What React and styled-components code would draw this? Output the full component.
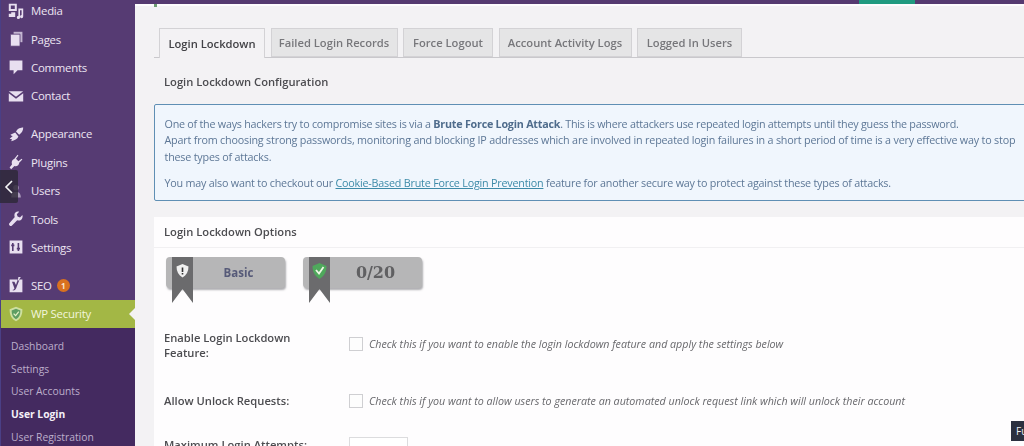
import React from "react";
import styled, { createGlobalStyle } from "styled-components";

const Global = createGlobalStyle`
  html, body { margin: 0; padding: 0; background: #f3f2f4; }
  body { font-family: "Open Sans", "Noto Sans", "Liberation Sans", sans-serif; overflow: hidden; }
  * { box-sizing: border-box; }
`;

const Page = styled.div`
  position: relative;
  display: flex;
  width: 1024px;
  height: 446px;
  overflow: hidden;
  filter: blur(0.5px);
`;

const Sidebar = styled.nav`
  flex: 0 0 135px;
  height: 446px;
  overflow: hidden;
  background: #563b73;
  border-left: 1px solid #4a3f86;
`;

const MenuList = styled.div`
  display: flex;
  flex-direction: column;
  margin-top: -3.5px;
`;

const MenuItem = styled.div`
  flex: none;
  display: flex;
  align-items: center;
  gap: 7px;
  height: 28.4px;
  padding-left: 7px;
  margin-top: ${(p) => p.$sep || 0}px;
  font-size: 11.4px;
  letter-spacing: -0.25px;
  color: #ede5f2;
  svg { flex: 0 0 16px; }
`;

const ActiveItem = styled(MenuItem)`
  position: relative;
  background: #a3b745;
  color: #f2f5dc;
  margin-top: 0;
  &::after {
    content: "";
    position: absolute;
    right: 0;
    top: 8px;
    border: 6px solid transparent;
    border-right-color: #f3f2f4;
  }
`;

const CountBadge = styled.span`
  display: inline-flex;
  align-items: center;
  justify-content: center;
  width: 13px;
  height: 13px;
  margin-left: -2px;
  border-radius: 50%;
  background: #d9711f;
  color: #fbe6cf;
  font-size: 8px;
  font-weight: 700;
`;

const SubMenu = styled.div`
  flex: none;
  display: flex;
  flex-direction: column;
  padding-top: 7px;
  height: 140px;
  background: #442a60;
`;

const SubItem = styled.div`
  flex: none;
  height: 22.7px;
  line-height: 22.7px;
  padding-left: 10px;
  font-size: 10.3px;
  font-weight: ${(p) => (p.$active ? 700 : 400)};
  color: ${(p) => (p.$active ? "#f4f0f7" : "#bdaecb")};
`;

const Collapse = styled.div`
  position: absolute;
  left: 0;
  top: 170px;
  width: 18px;
  height: 33px;
  display: flex;
  align-items: center;
  justify-content: center;
  background: rgba(45, 40, 55, 0.82);
  border-radius: 0 2px 2px 0;
`;

const Main = styled.main`
  flex: 1;
  min-width: 0;
  height: 446px;
  overflow: hidden;
`;

const TopBar = styled.div`
  display: flex;
  height: 4px;
  background: #553a70;
  padding-left: 724px;
`;

const TopAccent = styled.span`
  width: 56px;
  background: #1f9a7f;
`;

const TopGap = styled.div`
  height: 2px;
  background: #fdfcfd;
`;

const GreenTick = styled.div`
  position: absolute;
  left: 154px;
  top: 4px;
  width: 3px;
  height: 3px;
  background: #6d9c72;
`;

const Tabs = styled.div`
  display: flex;
  gap: 5.5px;
  height: 30px;
  margin: 22px 0 0 19px;
  padding-left: 5px;
  border-bottom: 1px solid #c9c8cc;
  align-items: flex-end;
`;

const Tab = styled.div`
  flex: none;
  display: flex;
  align-items: center;
  justify-content: center;
  width: ${(p) => p.$w}px;
  height: ${(p) => (p.$active ? 30 : 29)}px;
  margin-bottom: ${(p) => (p.$active ? -1 : 0)}px;
  font-size: 11.2px;
  font-weight: 600;
  white-space: nowrap;
  color: ${(p) => (p.$active ? "#424246" : "#77777b")};
  background: ${(p) => (p.$active ? "#f3f2f4" : "#e5e5e6")};
  border: 1px solid #d3d2d5;
  border-bottom: ${(p) => (p.$active ? "none" : "1px solid #d3d2d5")};
`;

const SectionTitle = styled.h2`
  margin: 0;
  padding: 15px 0 0 29px;
  height: 46px;
  font-size: 11.2px;
  line-height: 18px;
  font-weight: 600;
  color: #4c4c50;
`;

const Notice = styled.div`
  margin-left: 18.5px;
  margin-right: -4px;
  height: 97px;
  padding: 11px 10px 0 10px;
  background: #f0f6fd;
  border: 1px solid #5f8fb4;
  border-radius: 2px;
  font-size: 10.75px;
  line-height: 16.3px;
  color: #5d7796;
`;

const NoticePara = styled.p`
  margin: 0 0 ${(p) => (p.$tight ? 0 : 10)}px;
  letter-spacing: ${(p) => p.$ls}px;
  white-space: nowrap;
  strong { font-weight: 700; color: #4f6c8c; }
  a { color: #3d8aa8; text-decoration: underline; }
`;

const Panel = styled.section`
  margin: 16px 0 0 19px;
  background: #fefdfe;
  height: 240px;
`;

const PanelTitle = styled.h3`
  margin: 0;
  height: 31px;
  padding: 6px 0 0 10px;
  font-size: 11.2px;
  line-height: 18px;
  font-weight: 600;
  color: #4c4c50;
  border-bottom: 1px solid #f1f0f2;
`;

const Badges = styled.div`
  display: flex;
  gap: 18px;
  padding: 9px 0 0 12px;
  height: 82px;
`;

const Badge = styled.div`
  position: relative;
  display: flex;
  align-items: center;
  justify-content: center;
  width: 119px;
  height: 31px;
  padding-left: 26px;
  background: #b6b6b7;
  border-radius: 4px;
  box-shadow: 1px 2px 2px rgba(110, 110, 115, 0.55);
  color: ${(p) => p.$color};
  font-family: ${(p) => p.$font};
  font-size: ${(p) => p.$size}px;
  font-weight: 700;
`;

const Ribbon = styled.svg`
  position: absolute;
  left: 6px;
  top: 0;
`;

const FormRow = styled.div`
  display: grid;
  grid-template-columns: 185px 1fr;
  height: ${(p) => p.$h}px;
  padding-left: 10px;
`;

const FieldLabel = styled.div`
  font-size: 11.2px;
  line-height: 15px;
  font-weight: 600;
  color: #4c4c50;
`;

const FieldBody = styled.div`
  display: flex;
  align-items: flex-start;
  gap: 6px;
  padding-top: ${(p) => p.$top}px;
`;

const Check = styled.span`
  flex: 0 0 14px;
  height: 14px;
  background: #fdfdfd;
  border: 1px solid #cfcfd2;
`;

const Hint = styled.span`
  font-size: 10.7px;
  line-height: 14px;
  font-style: italic;
  white-space: nowrap;
  color: #68686c;
`;

const NumberBox = styled.span`
  display: block;
  width: 59px;
  height: 26px;
  border: 1px solid #dcdcde;
  background: #fff;
`;

const Tooltip = styled.div`
  position: absolute;
  left: 1011px;
  top: 421px;
  width: 20px;
  height: 20px;
  padding-left: 5px;
  background: #2b3040;
  color: #f1f1f3;
  font-size: 10px;
  line-height: 20px;
`;

const C = "#e8dff0";
const Ico = ({ children }) => (
  <svg width="16" height="16" viewBox="0 0 20 20" fill={C}>{children}</svg>
);

const icons = {
  media: <Ico><path d="M1 1h10v9H1z M3.5 3v4.500h5V3z" fillRule="evenodd" /><path d="M4 11.500h5v6H1v-4h3z" /><path d="M13 7h6v10a2 2 0 1 1-2-2V9h-2v9a2 2 0 1 1-2-2z" /></Ico>,
  pages: <Ico><path d="M7 1h11v13H7z" opacity=".75" /><path d="M3 4h12v15H3z" stroke="#563b73" strokeWidth="1" /></Ico>,
  comments: <Ico><path d="M2 2h16v12h-6l-5 5v-5H2z" /></Ico>,
  contact: <Ico><path d="M1 4h18L10 11z" /><path d="M1 6.5V17h18V6.5L10 13.5z" /></Ico>,
  appearance: <Ico><path d="M19 2c-3 0-7 1-9 5l4 4c3-2 5-5 5-9z" /><path d="M9 8l-6 3c1 1 2 1.5 3 1.5L2 16l3 .5-1 2.500c4-1 8-3 9-6z" /></Ico>,
  plugins: <Ico><path d="M13 2l-3 4 3 3 4-3 1 1-4 4c0 3-3 5-6 4l-4 4-2-2 3-4c-1-3 0-6 3-7l4-5z" /></Ico>,
  users: <Ico><circle cx="10" cy="6" r="3.5" opacity=".5" /><path d="M4 18c0-5 3-7 6-7s6 2 6 7z" opacity=".6" /></Ico>,
  tools: <Ico><path d="M18 5l-3 3-3-1-1-3 3-3c-3-1-6 1-6 4 0 1 0 2 .5 2.5L2 15c-1 1-1 2 0 3s2 1 3 0l6.500-6.500c.5.5 1.500.5 2.500.5 3 0 5-4 4-7z" /></Ico>,
  settings: <Ico><path d="M2 2h16v16H2z M5 5v2H4v2h1v6h2V9h1V7H7V5z M12 5v6h-1v2h1v2h2v-2h1v-2h-1V5z" fillRule="evenodd" /></Ico>,
  seo: <Ico><path d="M2 3h16v16H2z M5 6l3 8c0 1-1 2-2 2v1c3 0 4-2 5-5l3-7.500V3h-2l-2 7-2-4z" fillRule="evenodd" /><path d="M13 0l3 0-4 6z" /></Ico>,
  security: <svg width="16" height="16" viewBox="0 0 20 20"><path d="M10 1l8 3c0 7-2 12-8 15C4 16 2 11 2 4z" fill="#cfe0a0" /><path d="M10 3.5l5.500 2c0 5-1.500 8.500-5.500 11-4-2.500-5.500-6-5.500-11z" fill="#5e9e63" /><path d="M7 9.5l2.500 2.500 4-5" stroke="#e6f1c6" strokeWidth="1.6" fill="none" /></svg>,
};

const menuTop = [
  ["media", "Media"], ["pages", "Pages"], ["comments", "Comments"], ["contact", "Contact"],
  ["appearance", "Appearance", 9.6], ["plugins", "Plugins"], ["users", "Users"], ["tools", "Tools"], ["settings", "Settings"],
];

const RibbonShape = ({ children }) => (
  <Ribbon width={21} height={46} viewBox="0 0 21 46">
    <path d="M0 0H21V46L10.5 32L0 46Z" fill="#6b6b6d" />
    {children}
  </Ribbon>
);

export default function App() {
  return (
    <Page>
      <Global />
      <Sidebar>
        <MenuList>
          {menuTop.map(([icon, label, sep]) => (
            <MenuItem key={label} $sep={sep}>{icons[icon]}{label}</MenuItem>
          ))}
          <MenuItem $sep={9.6}>{icons.seo}SEO<CountBadge>1</CountBadge></MenuItem>
          <ActiveItem>{icons.security}WP Security</ActiveItem>
          <SubMenu>
            <SubItem>Dashboard</SubItem>
            <SubItem>Settings</SubItem>
            <SubItem>User Accounts</SubItem>
            <SubItem $active>User Login</SubItem>
            <SubItem>User Registration</SubItem>
          </SubMenu>
        </MenuList>
      </Sidebar>
      <Collapse>
        <svg width="10" height="16" viewBox="0 0 10 16" fill="none" stroke="#f5f5f7" strokeWidth="1.6"><path d="M8 2L2 8l6 6" /></svg>
      </Collapse>
      <Main>
        <TopBar><TopAccent /></TopBar>
        <TopGap />
        <Tabs>
          <Tab $active $w={106}>Login Lockdown</Tab>
          <Tab $w={127}>Failed Login Records</Tab>
          <Tab $w={90}>Force Logout</Tab>
          <Tab $w={133}>Account Activity Logs</Tab>
          <Tab $w={105}>Logged In Users</Tab>
        </Tabs>
        <SectionTitle>Login Lockdown Configuration</SectionTitle>
        <Notice>
          <NoticePara $tight $ls={-0.235}>One of the ways hackers try to compromise sites is via a <strong>Brute Force Login Attack</strong>. This is where attackers use repeated login attempts until they guess the password.</NoticePara>
          <NoticePara $tight $ls={-0.185}>Apart from choosing strong passwords, monitoring and blocking IP addresses which are involved in repeated login failures in a short period of time is a very effective way to stop</NoticePara>
          <NoticePara $ls={-0.2}>these types of attacks.</NoticePara>
          <NoticePara $ls={-0.21}>You may also want to checkout our <a>Cookie-Based Brute Force Login Prevention</a> feature for another secure way to protect against these types of attacks.</NoticePara>
        </Notice>
        <Panel>
          <PanelTitle>Login Lockdown Options</PanelTitle>
          <Badges>
            <Badge $color="#565a78" $size={11.5} $font={`"Open Sans", sans-serif`}>
              <RibbonShape>
                <path d="M10.5 7l6 2.5c0 5-2 8.500-6 11-4-2.500-6-6-6-11z" fill="#f0f0f0" />
                <rect x="9.7" y="10.5" width="1.6" height="4.5" fill="#333" />
                <rect x="9.7" y="16" width="1.6" height="1.5" fill="#333" />
              </RibbonShape>
              Basic
            </Badge>
            <Badge $color="#606062" $size={16} $font={`"DejaVu Serif", "Liberation Serif", serif`}>
              <RibbonShape>
                <path d="M10.5 6l7 3c0 6-2.500 10-7 13-4.500-3-7-7-7-13z" fill="#4fa85c" />
                <path d="M7 13l3 3.500 4.500-6.500" stroke="#eef7e6" strokeWidth="1.8" fill="none" />
              </RibbonShape>
              0/20
            </Badge>
          </Badges>
          <FormRow $h={63}>
            <FieldLabel>Enable Login Lockdown<br />Feature:</FieldLabel>
            <FieldBody $top={7}><Check /><Hint>Check this if you want to enable the login lockdown feature and apply the settings below</Hint></FieldBody>
          </FormRow>
          <FormRow $h={44}>
            <FieldLabel>Allow Unlock Requests:</FieldLabel>
            <FieldBody $top={1}><Check /><Hint>Check this if you want to allow users to generate an automated unlock request link which will unlock their account</Hint></FieldBody>
          </FormRow>
          <FormRow $h={30}>
            <FieldLabel>Maximum Login Attempts:</FieldLabel>
            <FieldBody $top={0}><NumberBox /></FieldBody>
          </FormRow>
        </Panel>
      </Main>
      <GreenTick />
      <Tooltip>Fu</Tooltip>
    </Page>
  );
}
